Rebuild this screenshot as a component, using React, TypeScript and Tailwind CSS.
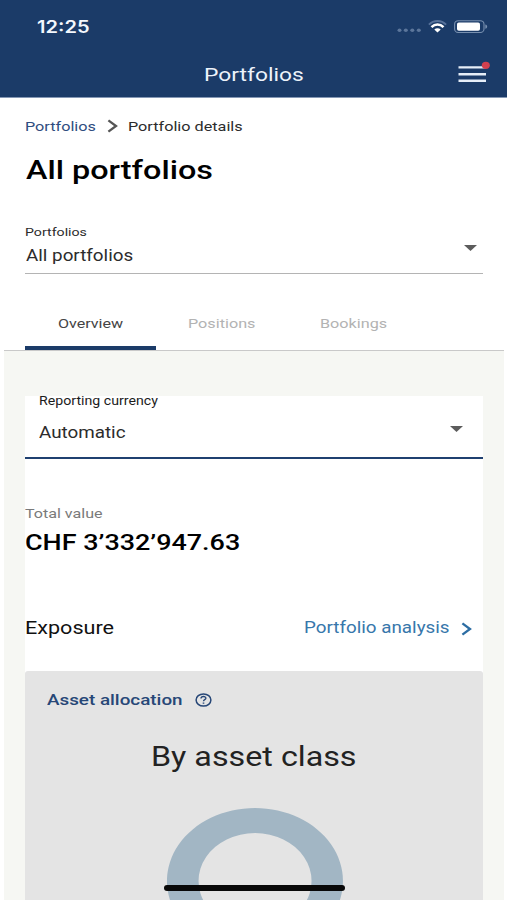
import type { ReactNode } from "react";

/** Wide-set label: the glyphs are stretched horizontally from their left edge. */
function Wide({ children, className = "" }: { children: ReactNode; className?: string }) {
  return (
    <span className={`block w-max origin-left whitespace-nowrap ${className}`}>{children}</span>
  );
}

function Caret() {
  return (
    <svg width="13" height="6" viewBox="0 0 13 6" className="block">
      <path d="M0 0H13L6.5 6Z" fill="#5c5c5c" />
    </svg>
  );
}

function Chevron({ color, className = "" }: { color: string; className?: string }) {
  return (
    <svg width="11" height="14" viewBox="0 0 11 14" className={className}>
      <path d="M1.4 1.4L9 7L1.4 12.6" fill="none" stroke={color} strokeWidth="2.3" />
    </svg>
  );
}

function StatusBar() {
  return (
    <div className="flex h-[54px] items-start justify-between pl-[37px] pr-[19px]">
      <Wide className="mt-[17px] scale-x-[1.18] font-['Inter'] text-[17px] font-semibold leading-[21px] text-[#f3f7fd]">
        12:25
      </Wide>
      <div className="mt-[20px] flex items-start">
        <svg width="24" height="14" viewBox="0 0 24 14">
          <g fill="#5c769b">
            <ellipse cx="2.5" cy="10.3" rx="2" ry="1.8" />
            <ellipse cx="8.8" cy="10.3" rx="2" ry="1.8" />
            <ellipse cx="15.3" cy="10.3" rx="2" ry="1.8" />
            <ellipse cx="21.8" cy="10.3" rx="2" ry="1.8" />
          </g>
        </svg>
        <svg width="19" height="14" viewBox="0 0 19 14" className="ml-[7px]">
          <path d="M0.9 4.7C5.6 -0.3 13.4 -0.3 18.1 4.7" fill="none" stroke="#56719a" strokeWidth="1.9" />
          <path d="M3.5 7.2C7 3.6 12 3.6 15.5 7.2" fill="none" stroke="white" strokeWidth="2.5" />
          <path d="M6.3 9.4C8.2 7.8 10.8 7.8 12.7 9.4L9.5 12.6Z" fill="white" />
        </svg>
        <svg width="34" height="14" viewBox="0 0 34 14" className="ml-[7px]">
          <rect x="0.6" y="0.7" width="29.4" height="11.8" rx="3.6" fill="none" stroke="#7890b0" strokeWidth="1.1" />
          <rect x="3" y="2.5" width="23" height="8.3" rx="1.8" fill="white" />
          <path d="M31.3 4.5C33.8 5 33.8 8.2 31.3 8.7Z" fill="#7890b0" />
        </svg>
      </div>
    </div>
  );
}

function AppBar() {
  return (
    <div className="flex h-[43px] items-start pl-[203.5px] pr-[17.5px]">
      <Wide className="mt-[9px] scale-x-[1.2] text-[19px] leading-6 text-[#edf3fb]">Portfolios</Wide>
      <svg width="33" height="24" viewBox="0 0 33 24" className="ml-auto mt-[5px]">
        <path d="M1.5 8.4H29M1.5 15.2H29M1.5 21.7H29" stroke="#e6eef8" strokeWidth="2.4" />
        <ellipse cx="28.8" cy="6.3" rx="4" ry="3.6" fill="#d2404f" />
      </svg>
    </div>
  );
}

export default function App() {
  return (
    <div className="relative flex h-[900px] w-[507px] flex-col overflow-hidden bg-white font-['Roboto',sans-serif] text-[#2c2c2c]">
      <header className="h-[98px] shrink-0 border-b border-[#8497b4] bg-[#1b3b68] text-white">
        <StatusBar />
        <AppBar />
      </header>

      <section className="h-[252px] shrink-0 pl-[25px] pr-[24px]">
        <nav className="flex h-[40px] items-start pt-[17.5px] text-[13.5px] leading-5">
          <div className="w-[82px]">
            <Wide className="scale-x-[1.2] text-[#2f4d80]">Portfolios</Wide>
          </div>
          <Chevron color="#555555" className="mt-[3.5px]" />
          <Wide className="ml-[10px] scale-x-[1.2]">Portfolio details</Wide>
        </nav>
        <h1 className="mt-[16px] h-[32px]">
          <Wide className="ml-[0.5px] scale-x-[1.245] text-[26px] font-medium leading-8 text-black">
            All portfolios
          </Wide>
        </h1>
        <div className="mt-[38px] flex h-[50px] items-start justify-between border-b-[1.5px] border-[#b4b4b4]">
          <div>
            <Wide className="scale-x-[1.23] text-[11.5px] leading-4">Portfolios</Wide>
            <Wide className="ml-[0.5px] mt-[6px] scale-x-[1.175] text-[16px] leading-5">All portfolios</Wide>
          </div>
          <div className="mr-[6px] mt-[21px]">
            <Caret />
          </div>
        </div>
        <div className="mt-[38px] flex h-[38px] text-[13.5px] leading-5 text-[#b3b3b3]">
          <div className="h-full w-[131px] border-b-4 border-[#1b3b68] pl-[32.5px] pt-[0.5px] text-[#444444]">
            <Wide className="scale-x-[1.19]">Overview</Wide>
          </div>
          <div className="w-[132px] pl-[31.5px] pt-[0.5px]">
            <Wide className="scale-x-[1.2]">Positions</Wide>
          </div>
          <div className="pl-[31.5px] pt-[0.5px]">
            <Wide className="scale-x-[1.2]">Bookings</Wide>
          </div>
        </div>
      </section>

      <main className="mx-[4px] mr-[3px] flex-1 border-t border-[#c9c9c9] bg-[#f6f7f3] px-[21px] pt-[45px]">
        <div className="h-full bg-white">
          <div className="flex h-[63px] items-start justify-between border-b-2 border-[#1f4070] pl-[14px] pr-[20px]">
            <div>
              <Wide className="-mt-[3px] scale-x-[1.18] text-[12px] leading-4 text-[#1c1c1c]">
                Reporting currency
              </Wide>
              <Wide className="mt-[14px] scale-x-[1.175] text-[16px] leading-5">Automatic</Wide>
            </div>
            <div className="mt-[30px]">
              <Caret />
            </div>
          </div>

          <Wide className="mt-[44px] scale-x-[1.19] text-[13.5px] leading-5 text-[#7a7a7a]">Total value</Wide>
          <Wide className="mt-[6px] scale-x-[1.225] text-[22px] font-medium leading-7 text-black">
            CHF 3’332’947.63
          </Wide>

          <div className="mt-[59px] flex h-[55px] items-start pr-[11px]">
            <Wide className="scale-x-[1.2] text-[18px] leading-6 text-[#111111]">Exposure</Wide>
            <div className="ml-auto flex items-start">
              <div className="w-[157px]">
                <Wide className="scale-x-[1.175] text-[16px] leading-6 text-[#3777ab]">Portfolio analysis</Wide>
              </div>
              <Chevron color="#2c6da3" className="mt-[5.5px]" />
            </div>
          </div>

          <div className="h-[229px] overflow-hidden rounded-t-[3px] bg-[#e4e4e4] pt-[19px]">
            <div className="flex items-start pl-[22px]">
              <div className="w-[148px]">
                <Wide className="scale-x-[1.215] text-[15.5px] font-medium leading-5 text-[#274777]">
                  Asset allocation
                </Wide>
              </div>
              <svg width="17" height="14" viewBox="0 0 17 14" className="mt-[3px]">
                <ellipse cx="8.5" cy="7" rx="7.4" ry="6.1" fill="none" stroke="#274777" strokeWidth="1.5" />
                <path
                  d="M6 5.5C6.1 2.9 10.9 2.9 10.9 5.3C10.9 6.7 8.5 6.7 8.5 8.3"
                  fill="none"
                  stroke="#274777"
                  strokeWidth="1.35"
                />
                <path d="M7.7 9.4H9.3V10.7H7.7Z" fill="#274777" />
              </svg>
            </div>
            <div className="mt-[31px] pl-[126px]">
              <Wide className="scale-x-[1.195] text-[27px] leading-8 text-[#222222]">By asset class</Wide>
            </div>
            <svg width="176" height="146" viewBox="0 0 176 146" className="ml-[141.5px] mt-[35px]">
              <path
                d="M88 0A88 73 0 1 1 87.9 0ZM88 25A56.5 48 0 1 0 88.1 25Z"
                fill="#a2b6c4"
                fillRule="evenodd"
              />
            </svg>
          </div>
        </div>
      </main>

      <div className="absolute left-[164px] top-[885px] h-[6px] w-[181px] rounded-full bg-[#080808]" />
    </div>
  );
}
